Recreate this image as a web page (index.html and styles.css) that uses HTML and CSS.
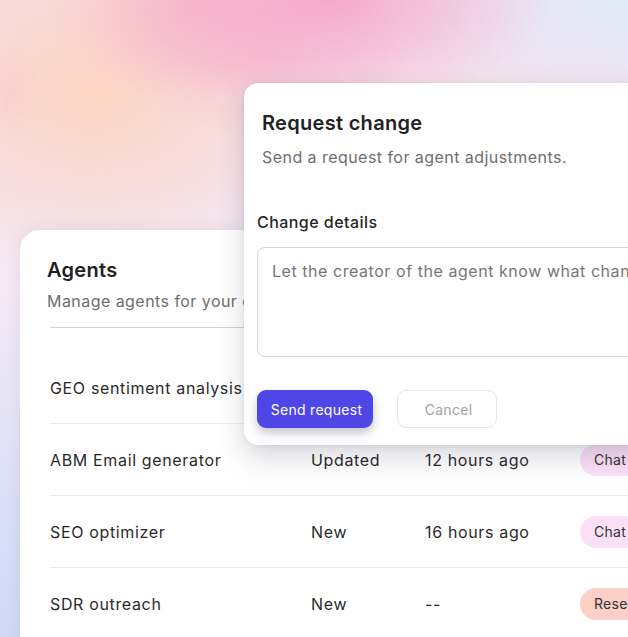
FILE: index.html
```html
<!DOCTYPE html>
<html lang="en">
<head>
  <meta charset="UTF-8">
  <title>Agents</title>
  <meta name="viewport" content="width=device-width, initial-scale=1">
  <link rel="stylesheet" href="styles.css">
</head>
<body>
  <div class="agents-card">
    <h2>Agents</h2>
    <p class="subtitle">Manage agents for your organization and team.</p>

    <div class="agent-table">
      <div class="agent-row first">
        <span class="name">GEO sentiment analysis</span>
        <span>Updated</span>
        <span>2 hours ago</span>
        <span class="chip chat">Chat</span>
      </div>
      <div class="agent-row">
        <span class="name">ABM Email generator</span>
        <span>Updated</span>
        <span>12 hours ago</span>
        <span class="chip chat">Chat</span>
      </div>
      <div class="agent-row">
        <span class="name">SEO optimizer</span>
        <span>New</span>
        <span>16 hours ago</span>
        <span class="chip chat">Chat</span>
      </div>
      <div class="agent-row">
        <span class="name">SDR outreach</span>
        <span>New</span>
        <span>--</span>
        <span class="chip research">Research</span>
      </div>
    </div>
  </div>

  <!-- Request dialog, sits over the agents list -->
  <div class="dialog">
    <div class="dialog-head">
      <h3>Request change</h3>
      <p class="subtitle">Send a request for agent adjustments.</p>
    </div>
    <form class="dialog-form">
      <label for="details">Change details</label>
      <textarea id="details" placeholder="Let the creator of the agent know what changes you would like"></textarea>
      <div class="actions">
        <button type="submit" class="btn-primary">Send request</button>
        <button type="button" class="btn-ghost">Cancel</button>
      </div>
    </form>
  </div>
</body>
</html>
```

FILE: styles.css
```css
body {
  font-family: 'Inter', 'Noto Sans', sans-serif;
  letter-spacing: 0.45px;
  margin: 0;
  padding: 0;
  height: 637px;
  overflow: hidden;
  color: #222;
  background-color: #f3ecf6;
  background-image:
    radial-gradient(ellipse 30px 45px at 12px 90px, rgba(247, 190, 196, 0.35), rgba(247, 190, 196, 0) 100%),
    radial-gradient(ellipse 220px 110px at 330px 0px, rgba(245, 168, 202, 0.95), rgba(245, 168, 202, 0) 100%),
    radial-gradient(ellipse 150px 80px at 260px 55px, rgba(246, 186, 206, 0.7), rgba(246, 186, 206, 0) 100%),
    radial-gradient(ellipse 140px 90px at 190px 10px, rgba(246, 180, 200, 0.8), rgba(246, 180, 200, 0) 100%),
    radial-gradient(ellipse 230px 180px at 90px 90px, rgba(252, 212, 194, 1), rgba(252, 212, 194, 0) 100%),
    radial-gradient(ellipse 280px 120px at 640px 0px, rgba(224, 235, 250, 1), rgba(224, 235, 250, 0) 100%),
    radial-gradient(ellipse 240px 360px at 0px 650px, rgba(206, 217, 246, 1), rgba(206, 217, 246, 0) 100%),
    linear-gradient(180deg, #f5dfe9 0%, #f4e9f4 45%, #f1eaf8 70%, #e9e6f8 100%);
}

.agents-card {
  margin: 230px 0 0 20px;
  width: 680px;
  height: 460px;
  background-color: #ffffff;
  border-radius: 20px;
  padding: 26px 0 0 0;
  box-shadow: 0 0 18px rgba(0,0,0,0.07);
  box-sizing: border-box;
}

h2, h3 {
  font-size: 20px;
  line-height: 28px;
  font-weight: 600;
  letter-spacing: 0.3px;
  margin: 0;
  color: #222;
}

.agents-card h2 {
  padding-left: 27px;
}

.subtitle {
  font-size: 16px;
  line-height: 24px;
  color: #6e6e6e;
  margin: 5px 0 0;
  white-space: nowrap;
}

.agents-card .subtitle {
  padding-left: 27px;
}

.agent-table {
  margin: 14px 0 0 30px;
  border-top: 1px solid #d2d2d2;
}

.agent-row {
  display: grid;
  grid-template-columns: 261px 114px 155px auto;
  align-items: center;
  height: 72px;
  font-size: 16px;
  letter-spacing: 0.65px;
  color: #2a2a2a;
  border-top: 1px solid #ececec;
  box-sizing: border-box;
}

.agent-row.first {
  border-top: none;
  margin-top: 24px;
  height: 71px;
}

.chip {
  justify-self: start;
  font-size: 14px;
  line-height: 32px;
  letter-spacing: 0.3px;
  padding: 0 14px;
  border-radius: 16px;
  color: #333;
}

.chip.chat {
  background-color: #fbe0f8;
}

.chip.research {
  background-color: #fcd0c6;
}

.dialog {
  position: absolute;
  left: 244px;
  top: 83px;
  width: 440px;
  height: 362px;
  background-color: #ffffff;
  border-radius: 14px;
  box-shadow: 0 12px 28px rgba(40,30,60,0.18), 0 1px 4px rgba(0,0,0,0.08);
  box-sizing: border-box;
  padding-top: 26px;
}

.dialog-head {
  padding: 0 18px;
}

.dialog-head .subtitle {
  margin-top: 8px;
}

.dialog-form {
  padding: 0 13px;
  margin-top: 41px;
}

label {
  display: block;
  font-size: 16px;
  line-height: 24px;
  font-weight: 500;
  color: #262626;
  margin-bottom: 13px;
}

textarea {
  display: block;
  width: 420px;
  height: 110px;
  box-sizing: border-box;
  border: 1px solid #d6d6d6;
  border-radius: 8px;
  padding: 11px 14px;
  font-family: inherit;
  font-size: 16px;
  line-height: 24px;
  letter-spacing: 0.55px;
  resize: none;
  white-space: nowrap;
  overflow: hidden;
}

textarea::placeholder {
  color: #767676;
}

.actions {
  display: flex;
  gap: 24px;
  margin-top: 33px;
}

.actions button {
  height: 38px;
  font-family: inherit;
  font-size: 14px;
  letter-spacing: 0.3px;
  border-radius: 9px;
  padding: 0 0 0 3px;
  cursor: pointer;
}

.btn-primary {
  width: 116px;
  background-color: #5046e5;
  color: #fff;
  border: none;
  box-shadow: 0 5px 10px rgba(30,25,70,0.25);
}

.btn-ghost {
  width: 100px;
  background-color: #fff;
  color: #a3a3a3;
  border: 1px solid #e6e6e6;
}
```
